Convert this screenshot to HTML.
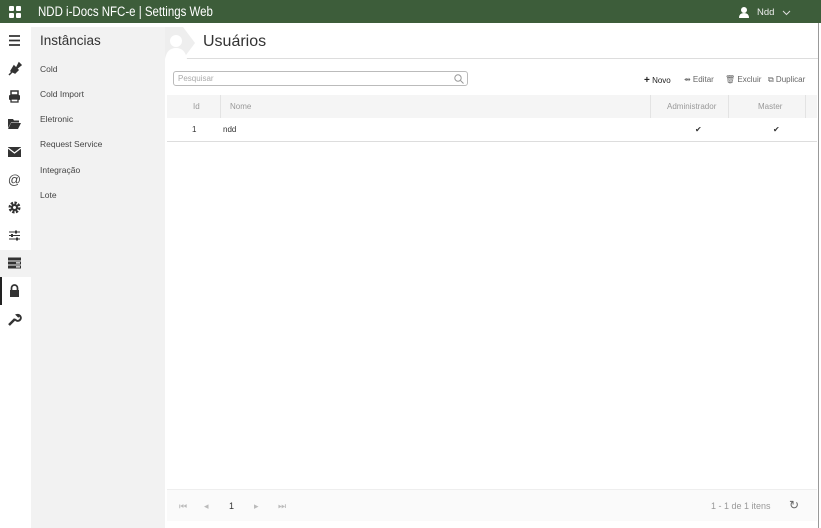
<!DOCTYPE html>
<html><head><meta charset="utf-8"><style>
*{margin:0;padding:0;box-sizing:border-box}
body{width:821px;height:528px;overflow:hidden;font-family:"Liberation Sans",sans-serif;background:#fff;position:relative;color:#333}
.top{position:absolute;left:0;top:0;width:821px;height:23px;background:#3d5d3a;color:#fff}
.top .t{position:absolute;left:38px;top:4px;font-size:13.5px;transform:scaleX(0.85);transform-origin:0 0;white-space:nowrap}
.top .u{position:absolute;left:757px;top:7px;font-size:9.5px;color:#eee}
.ib{position:absolute;left:0;top:23px;width:31px;height:505px;background:#fff}
.ic{position:absolute;left:7px;width:15px;height:15px}
.sb{position:absolute;left:31px;top:27px;width:134px;height:501px;background:#f2f2f2}
.sb h2{font-weight:normal;font-size:13.5px;position:absolute;left:9px;top:6px;color:#333}
.sb a{position:absolute;left:9px;font-size:8.5px;color:#444}
.ph{position:absolute;left:165px;top:27px;width:653px;height:32px;border-bottom:1px solid #ddd}
.ph h1{position:absolute;left:38px;top:6px;font-weight:normal;font-size:16px;color:#333}
.rl{position:absolute;left:818px;top:23px;width:1px;height:505px;background:#999}
.search{position:absolute;left:173px;top:71px;width:295px;height:15px;border:1px solid #bbb;border-radius:3px;font-size:8px;color:#aaa;padding:2px 4px}
.tb{position:absolute;top:75px;font-size:8px;color:#555}
.th{position:absolute;left:167px;top:95px;width:650px;height:23px;background:#f5f5f5;font-size:8px;color:#999}
.th div,.tr div{position:absolute;top:7px}
.tr{position:absolute;left:167px;top:118px;width:650px;height:24px;border-bottom:1px solid #ddd;font-size:8px;color:#333}
.sep{position:absolute;top:0;width:1px;height:23px;background:#e3e3e3}
.pg{position:absolute;left:167px;top:489px;width:650px;height:32px;background:#fafafa;border-top:1px solid #eee;font-size:9px;color:#bbb}
.pg span{position:absolute;top:11px}
</style></head><body>
<div class="top">
<svg style="position:absolute;left:9px;top:6px" width="12" height="12"><rect x="0" y="0" width="5" height="5" rx="1" fill="#fff"/><rect x="7" y="0" width="5" height="5" rx="1" fill="#fff"/><rect x="0" y="7" width="5" height="5" rx="1" fill="#fff"/><rect x="7" y="7" width="5" height="5" rx="1" fill="#fff"/></svg>
<div class="t">NDD i-Docs NFC-e | Settings Web</div>
<svg style="position:absolute;left:739px;top:7px" width="10" height="11"><circle cx="5" cy="3" r="3" fill="#fff"/><path d="M0 11 Q0 6 5 6 Q10 6 10 11Z" fill="#fff"/></svg>
<div class="u">Ndd</div>
<svg style="position:absolute;left:782px;top:10px" width="9" height="6"><path d="M1 1 L4.5 4.5 L8 1" stroke="#ddd" fill="none"/></svg>
</div>
<div class="ib">
<div style="position:absolute;left:0;top:227px;width:31px;height:27px;background:#f2f2f2"></div>
<div style="position:absolute;left:0;top:254px;width:2px;height:28px;background:#222"></div>
<svg class="ic" style="top:10px" viewBox="0 0 15 15"><path d="M2 3h11M2 7.5h11M2 12h11" stroke="#333" stroke-width="1.8"/></svg>
<svg class="ic" style="top:38px" viewBox="0 0 15 15"><path d="M2 14 L5 11 M5 11 L10 6 L12 2 L14 4 L9 8Z M7 5 L11 9 L8 12 L4 10Z" fill="#333" stroke="#333" stroke-width="1.5"/></svg>
<svg class="ic" style="top:66px" viewBox="0 0 15 15"><rect x="4" y="2" width="7" height="4" fill="none" stroke="#333" stroke-width="1.5"/><rect x="2" y="6" width="11" height="5" rx="1" fill="#333"/><rect x="4" y="10" width="7" height="3" fill="#fff" stroke="#333" stroke-width="1.3"/></svg>
<svg class="ic" style="top:93px" viewBox="0 0 15 15"><path d="M1 3h5l1 1.5h5v2H4L1 12Z" fill="#333"/><path d="M4 7h10l-3 6H1Z" fill="#333"/></svg>
<svg class="ic" style="top:121px" viewBox="0 0 15 15"><rect x="1" y="3" width="13" height="10" fill="#333"/><path d="M1 4 L7.5 9 L14 4" stroke="#fff" fill="none" stroke-width="1.2"/></svg>
<svg class="ic" style="top:149px" viewBox="0 0 15 15"><text x="7.5" y="12" font-size="13" text-anchor="middle" fill="#444" font-family="Liberation Sans">@</text></svg>
<svg class="ic" style="top:177px" viewBox="0 0 15 15"><circle cx="7.5" cy="7.5" r="4.5" fill="none" stroke="#333" stroke-width="3" stroke-dasharray="2.2 1.3"/><circle cx="7.5" cy="7.5" r="3.5" fill="#333"/><circle cx="7.5" cy="7.5" r="1.5" fill="#fff"/></svg>
<svg class="ic" style="top:205px" viewBox="0 0 15 15"><path d="M2 4h11M2 7.5h11M2 11h11" stroke="#333" stroke-width="1"/><rect x="8" y="2.5" width="2" height="3" fill="#333"/><rect x="4" y="6" width="2" height="3" fill="#333"/><rect x="9" y="9.5" width="2" height="3" fill="#333"/></svg>
<svg class="ic" style="top:232px" viewBox="0 0 15 15"><rect x="1" y="2.5" width="13" height="3" fill="#333"/><rect x="1" y="6.5" width="13" height="3" fill="#333"/><rect x="1" y="10.5" width="13" height="3" fill="#333"/><rect x="9" y="7.3" width="4" height="1.2" fill="#fff"/><rect x="9" y="11.3" width="4" height="1.2" fill="#fff"/></svg>
<svg class="ic" style="top:260px" viewBox="0 0 15 15"><path d="M4.5 7V5a3 3 0 0 1 6 0v2" stroke="#333" stroke-width="1.7" fill="none"/><rect x="3" y="7" width="9" height="7" fill="#333"/></svg>
<svg class="ic" style="top:289px" viewBox="0 0 15 15"><path d="M2 13 L8 7" stroke="#333" stroke-width="2.5"/><path d="M8 7 A3 3 0 1 0 10 3 L12 5" stroke="#333" stroke-width="2" fill="none"/></svg>
</div>
<div class="sb"><h2>Instâncias</h2>
<a style="top:37px">Cold</a><a style="top:62px">Cold Import</a><a style="top:87px">Eletronic</a><a style="top:112px">Request Service</a><a style="top:138px">Integração</a><a style="top:163px">Lote</a></div>
<div class="ph">
<svg style="position:absolute;left:0;top:0" width="30" height="32"><path d="M0 0 H18 L30 16 L18 32 H0Z" fill="#eee"/><circle cx="11" cy="14" r="6" fill="#fff"/><path d="M0 32 Q2 21 11 21 Q20 21 22 32Z" fill="#fff"/></svg>
<h1>Usuários</h1></div>
<div class="rl"></div>
<div class="search">Pesquisar
<svg style="position:absolute;right:3px;top:2px" width="10" height="10"><circle cx="4" cy="4" r="3.2" stroke="#999" fill="none"/><path d="M6.5 6.5L9.5 9.5" stroke="#999"/></svg></div>
<div class="tb" style="left:644px;color:#222"><b style="font-size:10px">+</b> Novo</div>
<div class="tb" style="left:684px;color:#666">⇴ Editar</div>
<div class="tb" style="left:725px;color:#666">🗑 Excluir</div>
<div class="tb" style="left:768px;color:#666">⧉ Duplicar</div>
<div class="th">
<div style="left:26px">Id</div><span class="sep" style="left:53px"></span>
<div style="left:63px">Nome</div><span class="sep" style="left:483px"></span>
<div style="left:500px">Administrador</div><span class="sep" style="left:561px"></span>
<div style="left:591px">Master</div><span class="sep" style="left:638px"></span></div>
<div class="tr"><div style="left:25px">1</div><div style="left:56px">ndd</div>
<div style="left:528px">✔</div><div style="left:606px">✔</div></div>
<div style="position:absolute;left:221px;top:489px;width:22px;height:2px;background:#f0dc9a"></div>
<div class="pg"><span style="left:12px">⏮</span><span style="left:37px">◂</span><span style="left:62px;color:#333">1</span><span style="left:87px">▸</span><span style="left:111px">⏭</span>
<span style="left:544px;color:#999">1 - 1 de 1 itens</span><span style="left:622px;top:8px;font-size:12px;color:#666">↻</span></div>
</body></html>
